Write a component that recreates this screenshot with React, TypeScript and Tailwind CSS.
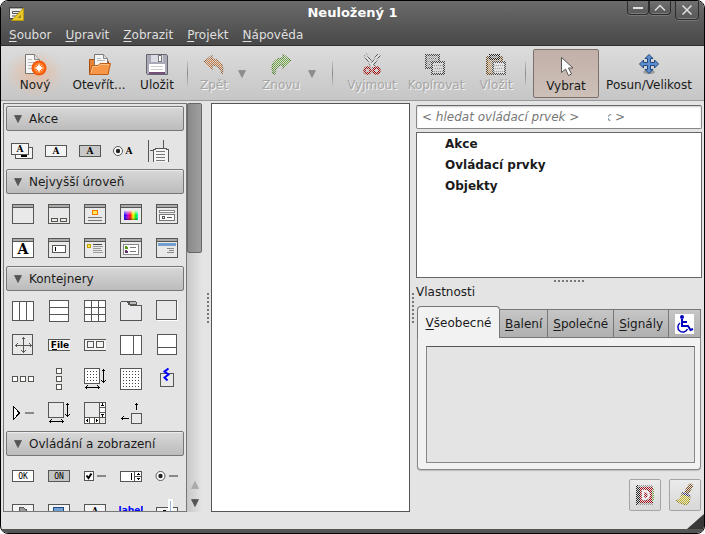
import type { ReactNode } from 'react';

const FRAME = '#555753';

function Glyph({ children, size = 24, soft = false }: { children: ReactNode; size?: number; soft?: boolean }) {
  return (
    <svg
      width={size}
      height={size}
      viewBox={`0 0 ${size} ${size}`}
      fill="none"
      stroke={FRAME}
      shapeRendering={soft ? 'auto' : 'crispEdges'}
      aria-hidden="true"
      className="block shrink-0"
    >
      {children}
    </svg>
  );
}

function Label({ x, y, size, children, color = '#000', serif = false }: { x: number; y: number; size: number; children: ReactNode; color?: string; serif?: boolean }) {
  return (
    <text
      x={x}
      y={y}
      fontSize={size}
      fontWeight="bold"
      textAnchor="middle"
      stroke="none"
      fill={color}
      fontFamily={serif ? '"DejaVu Serif", serif' : '"DejaVu Sans", sans-serif'}
    >
      {children}
    </text>
  );
}

function WindowShape({ children, fill = '#e9e9e9' }: { children?: ReactNode; fill?: string }) {
  return (
    <Glyph>
      <rect x="1.5" y="2.5" width="21" height="19" rx="1" fill={fill} />
      <path d="M2 4H22M2 3.5H22" stroke="#aaa" />
      <path d="M2 5.5H22" />
      {children}
    </Glyph>
  );
}

const actionIcons: [string, ReactNode][] = [
  ['Skupina akcí', (
    <Glyph>
      <rect x="5.5" y="8.5" width="17" height="11" rx="1" fill="#f4f4f4" />
      <path d="M11 17h6" stroke="#000" strokeWidth="2" />
      <rect x="1.5" y="4.5" width="17" height="11" rx="1" fill="#f4f4f4" />
      <Label x={10} y={13} size={9} serif>A</Label>
    </Glyph>
  )],
  ['Akce', (
    <Glyph>
      <rect x="1.5" y="6.5" width="21" height="11" rx="1" fill="#f4f4f4" />
      <Label x={12} y={15} size={9} serif>A</Label>
    </Glyph>
  )],
  ['Přepínací akce', (
    <Glyph>
      <rect x="1.5" y="6.5" width="21" height="11" rx="1" fill="#c8c8c8" />
      <Label x={12} y={15} size={9} serif>A</Label>
    </Glyph>
  )],
  ['Přepínačová akce', (
    <Glyph soft>
      <circle cx="6" cy="12" r="4.5" fill="#fff" />
      <circle cx="6" cy="12" r="2.2" fill="#222" stroke="none" />
      <Label x={17} y={15} size={9} serif>A</Label>
    </Glyph>
  )],
  ['Nedávné akce', (
    <Glyph>
      <path d="M2.5 1V23M17.500 1V9M4 11.500H7" />
      <path d="M7.500 23V10.500H9.500V9.500H20.500V10.500H22.500V23" fill="#f4f4f4" />
      <path d="M10 12.500H19M10 15.500H19M10 18.500H19M10 21.500H19" stroke="#777" />
    </Glyph>
  )],
];

const topIcons: [string, ReactNode][] = [
  ['Okno', <WindowShape />],
  ['Dialog', (
    <WindowShape>
      <rect x="4.500" y="16.500" width="6" height="3" rx="1" />
      <rect x="13.500" y="16.500" width="6" height="3" rx="1" />
    </WindowShape>
  )],
  ['O aplikaci', (
    <WindowShape>
      <rect x="9.500" y="8.500" width="5" height="4" fill="#fce94f" stroke="#f57900" />
      <path d="M5 15.500H19M5 18.500H19" stroke="#777" />
    </WindowShape>
  )],
  ['Výběr barvy', (
    <WindowShape>
      <defs>
        <linearGradient id="hue">
          <stop offset="0" stopColor="#00f" />
          <stop offset="0.300" stopColor="#c0c" />
          <stop offset="0.450" stopColor="#f00" />
          <stop offset="0.650" stopColor="#ff0" />
          <stop offset="0.850" stopColor="#0e0" />
          <stop offset="1" stopColor="#0ff" />
        </linearGradient>
        <linearGradient id="hueShade" x2="0" y2="1">
          <stop offset="0" stopColor="#fff" stopOpacity="0.700" />
          <stop offset="0.500" stopColor="#fff" stopOpacity="0" />
          <stop offset="1" stopColor="#000" stopOpacity="0.400" />
        </linearGradient>
      </defs>
      <rect x="5" y="9" width="14" height="9" fill="url(#hue)" stroke="none" />
      <rect x="5" y="9" width="14" height="9" fill="url(#hueShade)" stroke="none" />
    </WindowShape>
  )],
  ['Výběr souboru', (
    <WindowShape>
      <rect x="4.500" y="8.500" width="15" height="2" fill="#fff" stroke="#888" />
      <rect x="4.500" y="12.500" width="15" height="6" fill="#fff" stroke="#777" />
      <rect x="7.500" y="14.500" width="2" height="2" />
      <path d="M12 15.500H17" />
    </WindowShape>
  )],
  ['Výběr písma', (
    <WindowShape fill="#fff">
      <Label x={12} y={18} size={14} serif>A</Label>
    </WindowShape>
  )],
  ['Vstupní dialog', (
    <WindowShape>
      <rect x="5.500" y="9.500" width="13" height="7" rx="1" fill="#fff" />
      <path d="M8.500 11V15" stroke="#000" />
    </WindowShape>
  )],
  ['Zpráva', (
    <WindowShape>
      <rect x="4.500" y="8.500" width="3" height="3" fill="#fce94f" stroke="#c4a000" />
      <path d="M10 8.500H19" stroke="#444" />
      <path d="M10 10.500H20M10 12.500H18M10 14.500H19M10 16.500H20" stroke="#999" />
    </WindowShape>
  )],
  ['Průvodce', (
    <WindowShape>
      <rect x="4.500" y="8.500" width="15" height="10" fill="#fff" stroke="#888" />
      <path d="M6.500 10V13M8 11.500h1" stroke="#4e9a06" strokeWidth="2" />
      <path d="M6.500 14V17M8 15.500h1" stroke="#5c3566" strokeWidth="2" />
      <path d="M11 11.500H17M11 15.500H17" stroke="#777" />
    </WindowShape>
  )],
  ['Asistent', (
    <WindowShape>
      <rect x="3" y="7" width="18" height="3" fill="#729fcf" stroke="none" />
      <path d="M12 12.500H19M14 14.500H19M12 16.500H19" stroke="#888" />
    </WindowShape>
  )],
];

const containerIcons: [string, ReactNode][] = [
  ['Vodorovný box', (
    <Glyph><rect x="1.500" y="2.500" width="21" height="19" rx="1" fill="#fff" /><path d="M8.500 3V21M15.500 3V21" /></Glyph>
  )],
  ['Svislý box', (
    <Glyph><rect x="2.500" y="1.500" width="19" height="21" rx="1" fill="#fff" /><path d="M3 8.500H21M3 15.500H21" /></Glyph>
  )],
  ['Tabulka', (
    <Glyph><rect x="1.500" y="1.500" width="21" height="21" rx="1" fill="#fff" /><path d="M8.500 2V22M15.500 2V22M2 8.500H22M2 15.500H22" /></Glyph>
  )],
  ['Zápisník', (
    <Glyph>
      <rect x="1.500" y="6.500" width="21" height="15" rx="1" fill="#e9e9e9" />
      <path d="M2 7.500V3.500L3.500 2.500H8.500L10.500 6.500V7.500" fill="#e9e9e9" stroke="none" />
      <path d="M1.500 9V3.500L2.500 2.500H8.500L10.500 6.500" />
      <path d="M9.500 2.500H16.500L17.500 3.500V5.500H10.500V3.500Z" fill="#bbb" />
    </Glyph>
  )],
  ['Rám', (
    <Glyph><rect x="1.500" y="1.500" width="20" height="19" rx="1" fill="#e9e9e9" /><path d="M2 21.500H22.500V2" stroke="#fff" /></Glyph>
  )],
  ['Zarovnání', (
    <Glyph>
      <rect x="1.500" y="1.500" width="20" height="20" rx="1" fill="#e9e9e9" />
      <path d="M12.500 4V19M4 12.500H21M10.500 6.500L12.500 4.500L14.500 6.500M10.500 17.500L12.500 19.500L14.500 17.500M6.500 10.500L4.500 12.500L6.500 14.500M18.500 10.500L20.500 12.500L18.500 14.500" />
    </Glyph>
  )],
  ['Lišta nabídky', (
    <Glyph>
      <path d="M23 6.500H1.500V17.500H23" fill="#f4f4f4" />
      <Label x={13} y={15} size={9}>File</Label>
      <path d="M5 16.500H10" stroke="#000" />
    </Glyph>
  )],
  ['Lišta nástrojů', (
    <Glyph>
      <path d="M23 6.500H1.500V17.500H23" fill="#f4f4f4" />
      <rect x="4.500" y="8.500" width="6" height="6" rx="1" />
      <rect x="13.500" y="8.500" width="7" height="6" rx="1" />
    </Glyph>
  )],
  ['Vodorovné panely', (
    <Glyph><rect x="1.500" y="2.500" width="21" height="19" rx="1" fill="#fff" /><path d="M14.500 3V21" /></Glyph>
  )],
  ['Svislé panely', (
    <Glyph><rect x="2.500" y="1.500" width="19" height="20" rx="1" fill="#fff" /><path d="M3 14.500H21" /></Glyph>
  )],
  ['Vodorovná tlačítka', (
    <Glyph>
      <rect x="1.500" y="9.500" width="5" height="5" rx="1" fill="#fff" />
      <rect x="9.500" y="9.500" width="5" height="5" rx="1" fill="#fff" />
      <rect x="17.500" y="9.500" width="5" height="5" rx="1" fill="#fff" />
    </Glyph>
  )],
  ['Svislá tlačítka', (
    <Glyph>
      <rect x="9.500" y="1.500" width="5" height="5" rx="1" fill="#fff" />
      <rect x="9.500" y="9.500" width="5" height="5" rx="1" fill="#fff" />
      <rect x="9.500" y="17.500" width="5" height="5" rx="1" fill="#fff" />
    </Glyph>
  )],
  ['Rozvržení', (
    <Glyph>
      <rect x="1.500" y="1.500" width="15" height="15" fill="#fff" />
      <path d="M4 4.500H15M4 7.500H15M4 10.500H15M4 13.500H15" strokeDasharray="1 2" stroke="#444" />
      <path d="M20.500 2V16M18.500 4.500L20.500 2.500L22.500 4.500M18.500 13.500L20.500 15.500L22.500 13.500M2 20.500H17M4.500 18.500L2.500 20.500L4.500 22.500M14.500 18.500L16.500 20.500L14.500 22.500" stroke="#000" />
    </Glyph>
  )],
  ['Pevné', (
    <Glyph>
      <rect x="1.500" y="1.500" width="21" height="21" rx="1" fill="#fff" />
      <path d="M4 4.500H21M4 7.500H21M4 10.500H21M4 13.500H21M4 16.500H21M4 19.500H21" strokeDasharray="1 2" stroke="#444" />
    </Glyph>
  )],
  ['Pole událostí', (
    <Glyph>
      <rect x="5.500" y="6.500" width="13" height="13" rx="1" fill="#e9e9e9" />
      <path d="M13.500 1.500L9.500 4.500L13.500 7.500L9.500 10.500L12.500 13.500" stroke="#00f" strokeWidth="2" shapeRendering="auto" />
    </Glyph>
  )],
  ['Rozbalovač', (
    <Glyph>
      <path d="M2.500 5.500V18.500L8.500 12Z" fill="#fff" stroke="#000" />
      <path d="M14 12H23" stroke="#888" strokeWidth="2" />
    </Glyph>
  )],
  ['Pohled', (
    <Glyph>
      <rect x="1.500" y="1.500" width="15" height="15" fill="#e9e9e9" />
      <path d="M20.500 2V16M18.500 4.500L20.500 2.500L22.500 4.500M18.500 13.500L20.500 15.500L22.500 13.500M2 20.500H17M4.500 18.500L2.500 20.500L4.500 22.500M14.500 18.500L16.500 20.500L14.500 22.500" stroke="#000" />
    </Glyph>
  )],
  ['Posuvné okno', (
    <Glyph>
      <rect x="1.500" y="1.500" width="21" height="21" fill="#e9e9e9" />
      <rect x="16.500" y="1.500" width="6" height="15" fill="#fff" />
      <rect x="1.500" y="16.500" width="15" height="6" fill="#fff" />
      <path d="M17 6.500H22M17 11.500H22M6.500 17V22M11.500 17V22" />
      <path d="M18 5h3l-1.500-3zM18 13h3l-1.500 3zM5 18v3l-2-1.500zM13 18v3l2-1.500z" fill="#000" stroke="none" />
    </Glyph>
  )],
  ['Popisovač', (
    <Glyph>
      <rect x="12.500" y="12.500" width="10" height="10" rx="1" fill="#e9e9e9" />
      <path d="M17.500 9V2M15.500 4.500L17.500 2.500L19.500 4.500M10 17.500H2M4.500 15.500L2.500 17.500L4.500 19.500" stroke="#000" />
    </Glyph>
  )],
];

const controlIcons: [string, ReactNode][] = [
  ['Tlačítko', (
    <Glyph>
      <rect x="1.500" y="6.500" width="21" height="11" rx="1" fill="#fff" />
      <text x="12" y="15" fontSize="8" textAnchor="middle" stroke="none" fill="#000" fontFamily="DejaVu Sans Mono, monospace">OK</text>
    </Glyph>
  )],
  ['Přepínací tlačítko', (
    <Glyph>
      <rect x="1.500" y="6.500" width="21" height="11" rx="1" fill="#c4c4c4" />
      <text x="12" y="15" fontSize="8" textAnchor="middle" stroke="none" fill="#000" fontFamily="DejaVu Sans Mono, monospace">ON</text>
    </Glyph>
  )],
  ['Zaškrtávací tlačítko', (
    <Glyph>
      <rect x="1.500" y="7.500" width="9" height="9" rx="1" fill="#fff" />
      <path d="M3.500 11.500L5.500 14L8.500 9.500" stroke="#000" strokeWidth="2" shapeRendering="auto" />
      <path d="M14 12H23" stroke="#888a85" strokeWidth="2" />
    </Glyph>
  )],
  ['Číselník', (
    <Glyph>
      <rect x="1.500" y="7.500" width="21" height="10" rx="1" fill="#fff" />
      <path d="M15.500 8V17M16 12.500H22" />
      <path d="M12.500 9V16" stroke="#000" />
      <path d="M17 11h4l-2-2zM17 14h4l-2 2z" fill="#000" stroke="none" />
    </Glyph>
  )],
  ['Přepínač', (
    <Glyph soft>
      <circle cx="5.500" cy="12" r="4.500" fill="#fff" />
      <circle cx="5.500" cy="12" r="2.200" fill="#222" stroke="none" />
      <path d="M14 12H23" stroke="#888a85" strokeWidth="2" />
    </Glyph>
  )],
  ['Výběr souboru', (
    <Glyph>
      <rect x="1.500" y="6.500" width="21" height="11" rx="1" fill="#f4f4f4" />
      <path d="M8.500 15V9.500H12.500L14.500 11.500H15.500V15" fill="#999" />
    </Glyph>
  )],
  ['Výběr barvy', (
    <Glyph>
      <rect x="1.500" y="6.500" width="21" height="11" rx="1" fill="#f4f4f4" />
      <rect x="6.500" y="9.500" width="10" height="6" fill="#729fcf" stroke="#204a87" />
    </Glyph>
  )],
  ['Výběr písma', (
    <Glyph>
      <rect x="1.500" y="6.500" width="21" height="11" rx="1" fill="#f4f4f4" />
      <Label x={12} y={16} size={9} serif>A</Label>
    </Glyph>
  )],
  ['Popisek', <Glyph><Label x={12} y={15} size={9} color="#00f">label</Label></Glyph>],
  ['Posuvník', (
    <Glyph>
      <path d="M1.500 16V9.500H22.500V16" fill="#f4f4f4" />
      <path d="M8 12.500h3" stroke="#000" strokeWidth="2" />
      <rect x="13" y="1" width="5" height="13" fill="#fff" stroke="none" />
      <path d="M15.500 3V14" stroke="#9ab8dc" />
    </Glyph>
  )],
];

function Triangle({ className = '' }: { className?: string }) {
  return (
    <svg width="8" height="8" viewBox="0 0 8 8" aria-hidden="true" className={`block shrink-0 ${className}`}>
      <path d="M0.500 0.500H7.500L4 7.500Z" fill="currentColor" stroke="currentColor" strokeWidth="0.800" />
    </svg>
  );
}

function Group({ title, items, columns = 'grid-cols-5' }: { title: string; items: [string, ReactNode][]; columns?: string }) {
  return (
    <section>
      <button
        type="button"
        aria-expanded="true"
        className="flex h-[25px] w-full items-center gap-[7px] rounded-xs border border-[#777] bg-linear-to-b from-[#d8d8d8] to-[#bcbcbc] pl-[7px] shadow-[inset_0_1px_0_#ececec]"
      >
        <Triangle className="text-[#555]" />
        {title}
      </button>
      <div className={`-mx-px grid pt-[3px] pb-px ${columns}`}>
        {items.map(([name, icon]) => (
          <button key={name} type="button" aria-label={name} className="flex h-[34px] items-center justify-center">
            {icon}
          </button>
        ))}
      </div>
    </section>
  );
}

function ToolIcon({ children, dither = false }: { children: ReactNode; dither?: boolean }) {
  return (
    <svg width="24" height="24" viewBox="0 0 24 24" fill="none" aria-hidden="true" className="block">
      {dither && (
        <defs>
          <pattern id="checker" width="2" height="2" patternUnits="userSpaceOnUse">
            <rect width="2" height="2" fill="#000" />
            <rect width="1" height="1" fill="#fff" shapeRendering="crispEdges" />
            <rect x="1" y="1" width="1" height="1" fill="#fff" shapeRendering="crispEdges" />
          </pattern>
          <mask id="dither" maskUnits="userSpaceOnUse" x="0" y="0" width="24" height="24">
            <rect width="24" height="24" fill="url(#checker)" />
          </mask>
        </defs>
      )}
      <g mask={dither ? 'url(#dither)' : undefined}>{children}</g>
    </svg>
  );
}

const toolShapes = {
  create: (
    <>
      <path d="M2.500 1.500H11.500L16.500 6.500V20.500H2.500Z" fill="#f6f6f6" stroke="#777" />
      <path d="M11.500 1.500V6.500H16.500" fill="#ddd" stroke="#888" />
      <path d="M5 6.500H9M5 9.500H12M5 12.500H10M5 15.500H9" stroke="#bbb" />
      <circle cx="16" cy="15" r="7.500" fill="#f15a0a" />
      <circle cx="16" cy="15" r="5.500" fill="#ff7b28" />
      <path d="M16 10L17.200 13.800L21 15L17.200 16.200L16 20L14.800 16.200L11 15L14.800 13.800Z" fill="#fff" />
      <path d="M13.500 12.500L18.500 17.500M18.500 12.500L13.500 17.500" stroke="#fff" />
    </>
  ),
  open: (
    <>
      <path d="M2.500 20.500V6.500H8L10 8.500H21.500V20.500Z" fill="#e8833a" stroke="#a84b0c" />
      <path d="M7.500 14V1.500H16.500L20.500 5.500V14" fill="#f6f6f6" stroke="#777" />
      <path d="M16.500 1.500V5.500H20.500" stroke="#888" fill="#ddd" />
      <path d="M10 5.500H14M10 7.500H18" stroke="#bbb" />
      <path d="M2.500 21.500L5 12.500H11L13 10.500H23.500L21 21.500Z" fill="#f79646" stroke="#c25e14" />
      <path d="M4 20L6 13.500H11.500L13.500 11.500H22" stroke="#ffc088" />
    </>
  ),
  save: (
    <>
      <path d="M1.500 1.500H21.500L22.500 2.500V21.500H2.500L1.500 20.500Z" fill="#a9a9b8" stroke="#66666f" />
      <rect x="6" y="2" width="12" height="7" fill="#dcdce4" />
      <rect x="13.500" y="2.500" width="3" height="6" fill="#fff" stroke="#777" />
      <rect x="4" y="11" width="16" height="10" fill="#fff" />
      <path d="M6 13.500H18M6 16.500H18" stroke="#ccc" />
      <path d="M4 20H20" stroke="#75507b" strokeWidth="2" />
    </>
  ),
  undo: <path d="M2 9L10 2V6C18 6 23 12 20 21C19 16 15 12 10 12V17Z" fill="#c77b43" stroke="#8a5020" />,
  redo: <path d="M22 8L14 1V5C5 5 1 11 4 21H6C6 15 9 12 14 12V16Z" fill="#73a946" stroke="#3c6b16" />,
  cut: (
    <>
      <path d="M5 1.500L13.500 14M19 1.500L10.500 14" stroke="#444" strokeWidth="4" />
      <path d="M5 1.500L13.500 14M19 1.500L10.500 14" stroke="#e8e8e8" strokeWidth="2" />
      <circle cx="7.500" cy="17.500" r="3" stroke="#a40000" strokeWidth="2.500" />
      <circle cx="16.500" cy="17.500" r="3" stroke="#a40000" strokeWidth="2.500" />
    </>
  ),
  copy: (
    <>
      <rect x="2" y="2" width="13" height="13" fill="#aaa" stroke="#444" strokeWidth="2" />
      <path d="M4 5.500H13M4 8.500H13M4 11.500H13" stroke="#777" />
      <rect x="8" y="9" width="12" height="12" fill="#ddd" stroke="#444" strokeWidth="2" />
      <path d="M10 12.500H19M10 15.500H19M10 18.500H19" stroke="#999" />
    </>
  ),
  paste: (
    <>
      <rect x="3" y="4" width="15" height="17" rx="1" fill="#c09a68" stroke="#6b4817" strokeWidth="2" />
      <rect x="6" y="2" width="9" height="4" fill="#888" stroke="#222" strokeWidth="2" />
      <rect x="9" y="9" width="12" height="12" fill="#eee" stroke="#555" strokeWidth="2" />
      <path d="M10 12.500H19M10 15.500H19M10 18.500H19" stroke="#aaa" />
    </>
  ),
  select: <path d="M7.500 3.500V18.500L11.500 15L14.500 21.500L17.500 20L14.500 14H19Z" fill="#fff" stroke="#555" />,
  move: (
    <>
      <ellipse cx="12" cy="19" rx="6" ry="2" fill="#000" opacity="0.250" />
      <path
        d="M12 1.500L16 5.500H13.500V9.500H17.500V7L21.500 11L17.500 15V12.500H13.500V16.500H16L12 20.500L8 16.500H10.500V12.500H6.500V15L2.500 11L6.500 7V9.500H10.500V5.500H8Z"
        fill="#5e8fcc"
        stroke="#1f4680"
      />
    </>
  ),
};

function Tool({ label, icon, className, disabled = false }: { label: string; icon: ReactNode; className: string; disabled?: boolean }) {
  return (
    <button
      type="button"
      disabled={disabled}
      className={`flex h-[49px] shrink-0 flex-col items-center pt-1 leading-[17px] whitespace-nowrap ${disabled ? 'text-[#a6a6a6] [text-shadow:1px_1px_0_#f4f4f4]' : ''} ${className}`}
    >
      <ToolIcon dither={disabled}>{icon}</ToolIcon>
      {label}
    </button>
  );
}

function Separator({ className }: { className: string }) {
  return (
    <div role="separator" className={`flex h-[49px] shrink-0 items-center justify-center ${className}`}>
      <div className="h-[25px] w-px bg-linear-to-b from-[#c4c4c4] via-[#888] to-[#c4c4c4]" />
    </div>
  );
}

function HistoryArrow({ label }: { label: string }) {
  return (
    <button type="button" disabled aria-label={label} className="flex h-[49px] w-3.5 shrink-0 items-center justify-center text-[#8d8d8d]">
      <Triangle />
    </button>
  );
}

function Mnemonic({ text }: { text: string }) {
  return (
    <span>
      <span className="underline underline-offset-2">{text[0]}</span>
      {text.slice(1)}
    </span>
  );
}

const menus = ['Soubor', 'Upravit', 'Zobrazit', 'Projekt', 'Nápověda'];
const tabs = ['Balení', 'Společné', 'Signály'];

const windowButton = 'flex items-center justify-center rounded-b-sm border border-t-0 border-[#2c2c2c] bg-linear-to-b from-[#707070] to-[#575757] text-[#e0e0e0] shadow-[inset_0_-1px_0_#7c7c7c,0_1px_0_#777]';

export default function App() {
  return (
    <div className="flex h-screen flex-col overflow-hidden rounded-lg border border-black bg-[#e4e4e4] font-['DejaVu_Sans',sans-serif] text-[12px] text-[#1a1a1a]">
      <header className="shrink-0 border-b border-[#2e2e2e] bg-linear-to-b from-[#6b6b6b] to-[#484848] text-[#dfdfdf]">
        <div className="grid h-6 grid-cols-[1fr_auto_1fr] items-start">
          <svg width="18" height="18" viewBox="0 0 18 18" fill="none" aria-hidden="true" className="mt-1 ml-[7px]">
            <rect x="1.500" y="2.500" width="13" height="11" fill="#eee" stroke="#444" />
            <path d="M2 3.500H14" stroke="#aaa" />
            <path d="M4.500 6.500H11.500V8.500H4.500ZM4 11H9" stroke="#555" />
            <path d="M15.500 3V15.500H3.500Z" fill="#e9c829" stroke="#b99a10" />
            <path d="M13 9.500V13H9.500Z" fill="#a08820" />
          </svg>
          <h1 className="mt-1 text-[13px] leading-4 font-bold text-white">Neuložený 1</h1>
          <div className="mr-[5px] flex items-start justify-end">
            <button type="button" aria-label="Minimalizovat" className={`${windowButton} h-[14px] w-[22px]`}>
              <svg width="12" height="12" viewBox="0 0 12 12" stroke="currentColor" strokeWidth="2"><path d="M1 6H11" /></svg>
            </button>
            <button type="button" aria-label="Maximalizovat" className={`${windowButton} h-[14px] w-[22px]`}>
              <svg width="12" height="12" viewBox="0 0 12 12" fill="none" stroke="currentColor" strokeWidth="1.500"><path d="M1 8.500L6 3.500L11 8.500" /></svg>
            </button>
            <button type="button" aria-label="Zavřít" className={`${windowButton} ml-1 h-[19px] w-[24px]`}>
              <svg width="12" height="12" viewBox="0 0 12 12" stroke="currentColor" strokeWidth="1.500"><path d="M1.500 1.500L10.500 10.500M10.500 1.500L1.500 10.500" /></svg>
            </button>
          </div>
        </div>
        <nav className="flex h-5 items-center pl-px leading-4">
          {menus.map((menu) => (
            <button key={menu} type="button" className="px-[7px]">
              <Mnemonic text={menu} />
            </button>
          ))}
        </nav>
      </header>

      <div role="toolbar" aria-label="Hlavní lišta" className="flex h-[55px] shrink-0 items-start border-b border-[#999] bg-linear-to-b from-[#dcdcdc] to-[#c6c6c6] pt-[3px] pl-1">
        <Tool label="Nový" icon={toolShapes.create} className="w-[60px] bg-[radial-gradient(ellipse_at_center,#e6bda2_0%,transparent_68%)]" />
        <Tool label="Otevřít..." icon={toolShapes.open} className="w-[68px]" />
        <Tool label="Uložit" icon={toolShapes.save} className="w-12" />
        <Separator className="w-3" />
        <Tool label="Zpět" icon={toolShapes.undo} className="w-[42px]" disabled />
        <HistoryArrow label="Historie zpět" />
        <Tool label="Znovu" icon={toolShapes.redo} className="ml-2 w-12" disabled />
        <HistoryArrow label="Historie znovu" />
        <Separator className="w-[26px]" />
        <Tool label="Vyjmout" icon={toolShapes.cut} className="w-[54px]" disabled />
        <Tool label="Kopírovat" icon={toolShapes.copy} className="w-[74px]" disabled />
        <Tool label="Vložit" icon={toolShapes.paste} className="w-[46px]" disabled />
        <Separator className="w-3" />
        <button
          type="button"
          aria-pressed="true"
          className="ml-0.5 flex h-[49px] w-[66px] shrink-0 flex-col items-center rounded-xs border border-[#7d706b] bg-linear-to-b from-[#c2b0a9] to-[#ccc0b8] pt-1 leading-[17px]"
        >
          <ToolIcon>{toolShapes.select}</ToolIcon>
          Vybrat
        </button>
        <Tool label="Posun/Velikost" icon={toolShapes.move} className="w-[100px]" />
      </div>

      <main className="flex min-h-0 flex-1 pt-0.5 pr-[2px] pl-0.5">
        <aside className="mb-[17px] flex w-[199px] shrink-0 overflow-hidden">
          <div className="w-[184px] shrink-0 overflow-hidden border border-[#777] p-0.5">
            <Group title="Akce" items={actionIcons} columns="grid-cols-[repeat(5,34px)]" />
            <Group title="Nejvyšší úroveň" items={topIcons} />
            <Group title="Kontejnery" items={containerIcons} />
            <Group title="Ovládání a zobrazení" items={controlIcons} />
          </div>
          <div className="flex w-[15px] flex-col items-center bg-linear-to-r from-[#c8c8c8] to-[#e4e4e4]">
            <div className="h-[150px] w-full rounded-xs border border-[#666] bg-linear-to-r from-[#8a8a8a] to-[#a0a0a0]" />
            <div className="flex-1" />
            <button type="button" aria-label="Nahoru" className="flex h-[18px] w-full items-center justify-center text-[#aaa]">
              <Triangle className="rotate-180" />
            </button>
            <button type="button" aria-label="Dolů" className="flex h-[18px] w-full items-center justify-center text-[#555]">
              <Triangle />
            </button>
          </div>
        </aside>

        <div className="mb-[17px] flex w-[9px] shrink-0 items-center justify-end pr-0.5" role="separator" aria-orientation="vertical">
          <div className="h-[30px] w-0.5 bg-[repeating-linear-gradient(to_bottom,#777_0px,#777_2px,transparent_2px,transparent_4px)]" />
        </div>

        <section aria-label="Pracovní plocha" className="mb-[17px] min-w-0 flex-1 border border-[#555] bg-white" />

        <div className="mb-[17px] flex w-1.5 shrink-0 items-center justify-center" role="separator" aria-orientation="vertical">
          <div className="h-[30px] w-0.5 bg-[repeating-linear-gradient(to_bottom,#777_0px,#777_2px,transparent_2px,transparent_4px)]" />
        </div>

        <div className="flex w-[286px] shrink-0 flex-col">
          <div className="mt-0.5 flex h-6 items-center overflow-hidden rounded-xs border border-[#888] border-t-[#666] bg-white pl-[5px] text-[#777] italic shadow-[inset_0_1px_2px_#ccc]">
            <input aria-label="Hledat ovládací prvek" placeholder="< hledat ovládací prvek >" className="w-[186px] bg-transparent outline-none placeholder:text-[#777] placeholder:italic" />
            <div aria-hidden="true" className="flex w-[17px] justify-end overflow-hidden whitespace-nowrap">k &gt;</div>
          </div>
          <ul className="mt-[3px] h-[146px] shrink-0 border border-[#666] bg-white pt-px pl-7 leading-[21px] font-bold">
            <li>Akce</li>
            <li>Ovládací prvky</li>
            <li>Objekty</li>
          </ul>
          <div className="flex h-1.5 shrink-0 items-center justify-center" role="separator">
            <div className="ml-5 h-0.5 w-[30px] bg-[repeating-linear-gradient(to_right,#777_0px,#777_2px,transparent_2px,transparent_4px)]" />
          </div>
          <h2 className="leading-4">Vlastnosti</h2>
          <div className="mx-px flex flex-col">
            <div role="tablist" className="mt-1.5 flex h-8 shrink-0 items-end">
              <button role="tab" aria-selected="true" type="button" className="h-8 w-[83px] rounded-t-sm border border-b-0 border-[#777] bg-[#f2f2f2]">
                <Mnemonic text="Všeobecné" />
              </button>
              <div className="flex h-[29px] flex-1 border-y border-[#777] bg-linear-to-b from-[#c6c6c6] to-[#b0b0b0]">
                {tabs.map((tab) => (
                  <button key={tab} role="tab" aria-selected="false" type="button" className="border-r border-[#777] px-[5px]">
                    <Mnemonic text={tab} />
                  </button>
                ))}
                <button role="tab" aria-selected="false" aria-label="Přístupnost" type="button" className="flex flex-1 items-center justify-center border-r border-[#777]">
                  <svg width="22" height="20" viewBox="0 0 22 20" fill="none" stroke="#0000c0" strokeWidth="2" aria-hidden="true">
                    <rect x="1" width="19" height="20" fill="#fff" stroke="none" />
                    <circle cx="8" cy="3" r="2" fill="#0000c0" stroke="none" />
                    <path d="M8 5V12H14L16.500 16L19 15M8 8H13" />
                    <path d="M6 9A5 5 0 1 0 13.500 15" strokeWidth="1.500" />
                  </svg>
                </button>
              </div>
            </div>
            <div role="tabpanel" className="h-[132px] shrink-0 rounded-b-sm border border-t-0 border-[#888] bg-[#f2f2f2] pt-2 pr-[5px] pb-1.5 pl-2 shadow-[0_1px_1px_#bbb]">
              <div className="h-full border border-[#888] border-t-[#555] bg-[#e4e4e4]" />
            </div>
            <div className="mt-[9px] flex justify-end gap-2">
              <button type="button" disabled aria-label="Dokumentace" className="flex size-8 items-center justify-center rounded-xs border border-[#a4a4a4] bg-linear-to-b from-[#ebebeb] to-[#d8d8d8]">
                <ToolIcon dither>
                  <rect x="3" y="2" width="17" height="20" rx="1" fill="#a00010" />
                  <path d="M3 2H7V22H3Z" fill="#222" />
                  <path d="M5 3H20M5 21H20" stroke="#999" strokeWidth="2" />
                  <path d="M10 8H12C17 8 17 16 12 16H10Z" stroke="#fff" strokeWidth="2.500" />
                  <path d="M20 6V18" stroke="#73a946" strokeWidth="2" />
                </ToolIcon>
              </button>
              <button type="button" disabled aria-label="Vyčistit" className="flex size-8 items-center justify-center rounded-xs border border-[#a4a4a4] bg-linear-to-b from-[#ebebeb] to-[#d8d8d8]">
                <ToolIcon dither>
                  <path d="M17.500 3L14 9" stroke="#774a22" strokeWidth="5" strokeLinecap="round" />
                  <path d="M9 10L17 13C17 17 16 20 14 22C10 21 6 20 3 18C7 16 9 13 9 10Z" fill="#c8b820" stroke="#80720a" />
                  <path d="M9 10L17 13" stroke="#333388" strokeWidth="2" />
                </ToolIcon>
              </button>
            </div>
          </div>
        </div>
      </main>

      <footer className="shrink-0">
        <svg width="17" height="15" viewBox="0 0 17 15" aria-hidden="true" className="-mt-[15px] ml-auto block">
          <path d="M17 0V15H0Z" fill="#383838" />
        </svg>
        <div className="h-1 bg-[#555]" />
      </footer>
    </div>
  );
}
